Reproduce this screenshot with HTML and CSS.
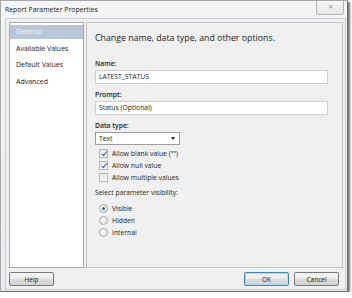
FILE: index.html
```html
<!DOCTYPE html>
<html lang="en">
<head>
  <meta charset="UTF-8" />
  <title>Report Parameter Properties</title>
  <link rel="stylesheet" href="styles.css">
</head>
<body>
  <div class="window">
    <div class="titlebar">
      <span class="title">Report Parameter Properties</span>
      <span class="close">&#x2715;</span>
    </div>

    <div class="client">
      <div class="main">
        <ul class="nav">
          <li class="active">General</li>
          <li>Available Values</li>
          <li>Default Values</li>
          <li>Advanced</li>
        </ul>

        <div class="panel">
          <h1>Change name, data type, and other options.</h1>

          <label class="field-label">Name:</label>
          <div class="textbox">LATEST_STATUS</div>

          <label class="field-label">Prompt:</label>
          <div class="textbox">Status (Optional)</div>

          <label class="field-label">Data type:</label>
          <div class="select">
            <span>Text</span>
            <span class="arrow"></span>
          </div>

          <div class="checks">
            <div class="check-row"><span class="checkbox checked"></span>Allow blank value ("")</div>
            <div class="check-row"><span class="checkbox checked"></span>Allow null value</div>
            <div class="check-row"><span class="checkbox"></span>Allow multiple values</div>
          </div>

          <label class="field-label plain">Select parameter visibility:</label>
          <div class="radios">
            <div class="check-row"><span class="radio selected"></span>Visible</div>
            <div class="check-row"><span class="radio"></span>Hidden</div>
            <div class="check-row"><span class="radio"></span>Internal</div>
          </div>
        </div>
      </div>

      <div class="footer">
        <button class="btn">Help</button>
        <div class="spacer"></div>
        <button class="btn default">OK</button>
        <button class="btn">Cancel</button>
      </div>
    </div>
  </div>
</body>
</html>
```

FILE: styles.css
```css
body {
  margin: 0;
  background: #ffffff;
  font-family: "Open Sans", Arial, sans-serif;
  color: #1e1e1e;
}

.window {
  width: 346px;
  height: 290px;
  border: 1px solid #6a6a6a;
  border-top-color: #a8a8a8;
  border-left-color: #a8a8a8;
  background: linear-gradient(#f4f5f7, #e9ebee);
  box-shadow: 2px 2px 2px rgba(0, 0, 0, 0.55);
  display: flex;
  flex-direction: column;
}

.titlebar {
  height: 17px;
  display: flex;
  justify-content: space-between;
  align-items: flex-start;
  padding-left: 4px;
  padding-right: 3px;
}

.title {
  font-size: 6.9px;
  line-height: 17px;
  color: #222;
}

.close {
  width: 26px;
  height: 13px;
  border: 1px solid #b4b4b4;
  border-top: none;
  border-radius: 0 0 3px 3px;
  background: linear-gradient(#f7f7f7, #e6e6e6);
  font-size: 6px;
  line-height: 13px;
  text-align: center;
  color: #8a8a8a;
}

.client {
  flex: 1;
  margin: 0 1px 1px 4px;
  border: 1px solid #c9ccd0;
  background: #f0f0f0;
  padding: 3px 2px 0 3px;
  display: flex;
  flex-direction: column;
}

.main {
  display: flex;
  gap: 2px;
  height: 246px;
}

.nav {
  width: 73px;
  margin: 0;
  padding: 2px 0 0;
  list-style: none;
  background: #fff;
  border: 1px solid #a9a9a9;
  font-size: 7px;
}

.nav li {
  height: 14px;
  line-height: 14px;
  padding-left: 6px;
  margin-bottom: 2.5px;
  color: #222;
}

.nav li.active {
  background: #b8c8d8;
  color: #f4f7fa;
}

.panel {
  flex: 1;
  border: 1px solid #c3c3c3;
  background: #f0f0f0;
  padding: 9px 14px 0 8px;
}

h1 {
  font-size: 8.8px;
  font-weight: normal;
  margin: 0 0 15px;
  color: #222;
}

.field-label {
  display: block;
  font-size: 6.8px;
  font-weight: 600;
  margin-bottom: 2px;
}

.field-label.plain {
  font-weight: normal;
  margin-top: 5px;
}

.textbox {
  height: 12px;
  line-height: 12px;
  background: #fff;
  border: 1px solid #cfcfcf;
  font-size: 6.8px;
  padding-left: 3px;
  margin-bottom: 6px;
}

.select {
  width: 76px;
  height: 11px;
  border: 1px solid #9c9c9c;
  background: #fff;
  font-size: 6.8px;
  line-height: 11px;
  padding: 0 4px 0 3px;
  display: flex;
  justify-content: space-between;
  align-items: center;
}

.arrow {
  width: 0;
  height: 0;
  border-left: 2.5px solid transparent;
  border-right: 2.5px solid transparent;
  border-top: 3px solid #222;
}

.checks {
  padding: 2px 0 0 4px;
}

.radios {
  padding: 3px 0 0 4px;
}

.check-row {
  display: flex;
  align-items: center;
  height: 12px;
  font-size: 6.8px;
  gap: 4px;
}

.checkbox {
  width: 7px;
  height: 7px;
  border: 1px solid #b5b5b5;
  background: linear-gradient(#e8e8e8, #f8f8f8);
  position: relative;
}

.checkbox.checked::after {
  content: "";
  position: absolute;
  left: 2.5px;
  top: 0;
  width: 2px;
  height: 4.5px;
  border: solid #3a5da8;
  border-width: 0 1.2px 1.2px 0;
  transform: rotate(40deg);
}

.radio {
  width: 7px;
  height: 7px;
  border: 1px solid #a8a8a8;
  border-radius: 50%;
  background: radial-gradient(circle at 40% 35%, #fff, #dcdcdc);
  position: relative;
}

.radio.selected::after {
  content: "";
  position: absolute;
  left: 2px;
  top: 2px;
  width: 3px;
  height: 3px;
  border-radius: 50%;
  background: #2c5a8c;
}

.footer {
  display: flex;
  align-items: center;
  gap: 5px;
  padding: 4px 4px 0 0;
}

.spacer {
  flex: 1;
}

.btn {
  width: 45px;
  height: 14px;
  padding: 0;
  border: 1px solid #7a7a7a;
  border-radius: 2px;
  background: linear-gradient(#f4f4f4 0%, #ebebeb 50%, #dcdcdc 51%, #d2d2d2 100%);
  font-family: "Open Sans", Arial, sans-serif;
  font-size: 6.5px;
  color: #222;
}

.btn.default {
  border-color: #3c88b8;
  box-shadow: inset 0 0 0 1px #a6dcf4;
}
```
